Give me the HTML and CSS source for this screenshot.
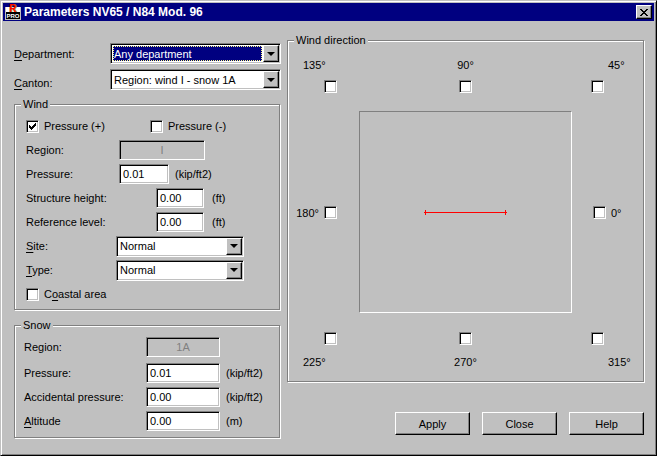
FILE: index.html
```html
<!DOCTYPE html>
<html lang="en">
<head>
    <meta charset="UTF-8">
    <meta name="viewport" content="width=device-width, initial-scale=1.0">
    <title>Parameters NV65 / N84 Mod. 96</title>
    <link rel="stylesheet" href="styles.css">
</head>
<body>

<div class="dialog">
    <div class="titlebar">
        <svg class="app-icon" width="16" height="16" viewBox="0 0 16 16">
            <rect x="0" y="3" width="16" height="13" fill="#c0c0c0"/>
            <rect x="1" y="3" width="14" height="5" fill="#fff"/>
            <text class="icon-r icon-shade" x="5" y="8">R</text>
            <text class="icon-r" x="4" y="8">R</text>
            <rect x="1" y="8" width="14" height="7" fill="#000"/>
            <text class="icon-pro" x="8" y="14">PRO</text>
        </svg>
        <h1>Parameters NV65 / N84 Mod. 96</h1>
        <button class="close-btn" type="button" aria-label="Close window">
            <svg width="8" height="7" viewBox="0 0 8 7" shape-rendering="crispEdges">
                <path d="M0 0h2v1h-2zM6 0h2v1h-2zM1 1h2v1h-2zM5 1h2v1h-2zM2 2h4v1h-4zM3 3h2v1h-2zM2 4h4v1h-4zM1 5h2v1h-2zM5 5h2v1h-2zM0 6h2v1h-2zM6 6h2v1h-2z"/>
            </svg>
        </button>
    </div>

    <form class="content">
        <div class="left">
            <div class="place">
                <label for="department"><u>D</u>epartment:</label>
                <span class="combo selected">
                    <select id="department"><option>Any department</option></select>
                    <span class="arrow"></span>
                </span>
                <label class="low" for="canton"><u>C</u>anton:</label>
                <span class="combo">
                    <select id="canton"><option>Region: wind I - snow 1A</option></select>
                    <span class="arrow"></span>
                </span>
            </div>

            <fieldset class="wind">
                <legend>Wind</legend>
                <div class="row checks">
                    <label class="check"><input type="checkbox" checked> Pressure (+)</label>
                    <label class="check"><input type="checkbox"> Pressure (-)</label>
                </div>
                <div class="row">
                    <label for="wind_region">Region:</label>
                    <input type="text" class="region" id="wind_region" value="I" disabled>
                </div>
                <div class="row">
                    <label for="wind_pressure">Pressure:</label>
                    <input type="text" class="short" id="wind_pressure" value="0.01">
                    <span>(kip/ft2)</span>
                </div>
                <div class="row far">
                    <label for="height">Structure height:</label>
                    <input type="text" class="short" id="height" value="0.00">
                    <span class="unit-ft">(ft)</span>
                </div>
                <div class="row far">
                    <label for="level">Reference level:</label>
                    <input type="text" class="short" id="level" value="0.00">
                    <span class="unit-ft">(ft)</span>
                </div>
                <div class="row near">
                    <label for="site"><u>S</u>ite:</label>
                    <span class="combo">
                        <select id="site"><option>Normal</option></select>
                        <span class="arrow"></span>
                    </span>
                </div>
                <div class="row near">
                    <label for="type"><u>T</u>ype:</label>
                    <span class="combo">
                        <select id="type"><option>Normal</option></select>
                        <span class="arrow"></span>
                    </span>
                </div>
                <div class="row">
                    <label class="check"><input type="checkbox"> <span>C<u>o</u>astal area</span></label>
                </div>
            </fieldset>

            <fieldset class="snow">
                <legend>Snow</legend>
                <div class="row first">
                    <label for="snow_region">Region:</label>
                    <input type="text" id="snow_region" value="1A" disabled>
                </div>
                <div class="row">
                    <label for="snow_pressure">Pressure:</label>
                    <input type="text" id="snow_pressure" value="0.01">
                    <span>(kip/ft2)</span>
                </div>
                <div class="row">
                    <label for="accidental">Accidental pressure:</label>
                    <input type="text" id="accidental" value="0.00">
                    <span>(kip/ft2)</span>
                </div>
                <div class="row">
                    <label for="altitude"><u>A</u>ltitude</label>
                    <input type="text" id="altitude" value="0.00">
                    <span>(m)</span>
                </div>
            </fieldset>
        </div>

        <div class="right">
            <fieldset class="direction">
                <legend>Wind direction</legend>
                <div class="compass">
                    <label class="dir corner-left"><span>135°</span><input type="checkbox"></label>
                    <label class="dir"><span>90°</span><input type="checkbox"></label>
                    <label class="dir corner-right"><span>45°</span><input type="checkbox"></label>

                    <label class="dir side-left"><span>180°</span><input type="checkbox"></label>
                    <div class="preview">
                        <svg width="83" height="6" viewBox="0 0 83 6" shape-rendering="crispEdges">
                            <rect x="0" y="3" width="83" height="1" fill="#ff0000"/>
                            <rect x="1" y="1" width="1" height="5" fill="#ff0000"/>
                            <rect x="81" y="1" width="1" height="5" fill="#ff0000"/>
                        </svg>
                    </div>
                    <label class="dir side-right"><input type="checkbox"><span>0°</span></label>

                    <label class="dir bottom corner-left"><input type="checkbox"><span>225°</span></label>
                    <label class="dir bottom"><input type="checkbox"><span>270°</span></label>
                    <label class="dir bottom corner-right"><input type="checkbox"><span>315°</span></label>
                </div>
            </fieldset>

            <div class="buttons">
                <button class="btn" type="button">Apply</button>
                <button class="btn" type="button">Close</button>
                <button class="btn" type="button">Help</button>
            </div>
        </div>
    </form>
</div>

</body>
</html>
```
FILE: styles.css
```css
* {
    box-sizing: border-box;
}
body {
    margin: 0;
    background: #c0c0c0;
}
body, input, select, button {
    font-family: "Liberation Sans", Arial, sans-serif;
    font-size: 11px;
    line-height: 14px;
    color: #000;
}
u {
    text-underline-offset: 2px;
}
.dialog {
    display: flex;
    flex-direction: column;
    min-height: 100vh;
    padding: 2px;
    border: 1px solid;
    border-color: #c0c0c0 #000 #000 #c0c0c0;
    box-shadow: inset 1px 1px #fff, inset -1px -1px #808080;
}
.titlebar {
    display: flex;
    align-items: center;
    height: 18px;
    padding: 0 2px;
    background: #000080;
}
.titlebar h1 {
    flex: 1;
    margin: 0 0 0 3px;
    font-size: 12px;
    line-height: 16px;
    color: #fff;
}
.app-icon {
    overflow: visible;
}
.icon-r {
    font: bold 10px "Liberation Sans", Arial, sans-serif;
    fill: #ff0000;
}
.icon-shade {
    fill: #808000;
}
.icon-pro {
    font: bold 6px "Liberation Sans", Arial, sans-serif;
    fill: #fff;
    text-anchor: middle;
}
.close-btn, .btn, .arrow {
    padding: 0;
    background: #c0c0c0;
    border: 1px solid;
    border-color: #fff #000 #000 #fff;
    box-shadow: inset -1px -1px #808080;
}
.close-btn {
    display: flex;
    align-items: center;
    justify-content: center;
    width: 16px;
    height: 14px;
}

.content {
    display: grid;
    grid-template-columns: 267px 1fr;
    column-gap: 6px;
    flex: 1;
    padding: 12px 10px 15px 11px;
}
.left, .right {
    display: flex;
    flex-direction: column;
}
.place {
    display: grid;
    grid-template-columns: 96px 1fr;
    row-gap: 5px;
    align-items: center;
    margin: 10px 0 7px;
}
.low {
    align-self: end;
}

fieldset {
    min-width: 0;
    margin: 0;
    padding: 0;
    border: 1px solid #808080;
    box-shadow: 1px 1px #fff, inset 1px 1px #fff;
}
legend {
    margin-left: 6px;
    padding: 0 2px;
    background: #c0c0c0;
}
.row {
    display: flex;
    align-items: center;
    gap: 6px;
    height: 24px;
}

input[type="text"] {
    height: 20px;
    margin: 0;
    padding: 2px 3px;
    background: #fff;
    border: 1px solid;
    border-color: #808080 #fff #fff #808080;
    border-radius: 0;
    box-shadow: inset 1px 1px #000, inset -1px -1px #c0c0c0;
}
input[type="text"]:disabled {
    background: #c0c0c0;
    color: #808080;
    text-align: center;
}
input[type="checkbox"] {
    appearance: none;
    flex: none;
    width: 13px;
    height: 13px;
    margin: 0;
    background: #fff;
    border: 1px solid;
    border-color: #808080 #fff #fff #808080;
    box-shadow: inset 1px 1px #000, inset -1px -1px #c0c0c0;
}
input[type="checkbox"]:checked {
    background: #fff url("data:image/svg+xml,%3Csvg xmlns='http://www.w3.org/2000/svg' width='7' height='7' shape-rendering='crispEdges'%3E%3Cpath d='M0 2h1v1h1v1h1v-1h1v-1h1v-1h1v-1h1v3h-1v1h-1v1h-1v1h-1v1h-1v-1h-1v-1h-1z'/%3E%3C/svg%3E") no-repeat 2px 2px;
}
.check {
    display: flex;
    align-items: center;
    gap: 5px;
}
.combo {
    display: flex;
    height: 21px;
    padding: 1px;
    background: #fff;
    border: 1px solid;
    border-color: #808080 #fff #fff #808080;
    box-shadow: inset 1px 1px #000, inset -1px -1px #c0c0c0;
}
.combo select {
    appearance: none;
    flex: 1;
    min-width: 0;
    margin: 1px;
    padding: 0 1px;
    background: #fff;
    border: 0;
    border-radius: 0;
}
.combo.selected select {
    padding: 0;
    background: #000080;
    border: 1px dotted #ffff80;
    color: #fff;
}
.arrow {
    display: flex;
    align-items: center;
    justify-content: center;
    width: 16px;
    pointer-events: none;
}
.arrow::before {
    content: "";
    border: 4px solid transparent;
    border-top-color: #000;
    border-bottom: 0;
}

.wind, .snow {
    margin-right: 1px;
}
.wind {
    padding: 3px 0;
}
.wind .row {
    padding-left: 11px;
}
.wind .row label {
    width: 93px;
}
.wind .row .check {
    width: 124px;
}
.wind .checks {
    gap: 0;
}
.row input.region {
    width: 86px;
}
.row .short {
    width: 50px;
}
.wind .row > label:not(.check) + * {
    margin-left: -6px;
}
.wind .far label {
    width: 130px;
}
.wind .far .short {
    width: 48px;
}
.unit-ft {
    margin-left: 2px;
}
.wind .near label {
    width: 90px;
}
.near .combo {
    width: 128px;
}

.snow {
    margin-top: 8px;
    padding: 3px 0 4px;
}
.snow .row {
    padding-left: 9px;
}
.snow label {
    width: 116px;
}
.snow input {
    width: 74px;
}
.snow .first {
    margin-bottom: 2px;
}

.direction {
    flex: 1;
}
.compass {
    display: grid;
    grid-template-columns: 52px 1fr 40px;
    grid-template-rows: auto 1fr auto;
    column-gap: 19px;
    row-gap: 18px;
    height: 100%;
    padding: 11px 12px 12px 0;
}
.dir {
    display: flex;
    flex-direction: column;
    align-items: center;
    gap: 8px;
}
.bottom {
    gap: 10px;
}
.corner-left {
    align-items: flex-start;
    padding: 0 3px 0 15px;
}
.corner-left input {
    align-self: flex-end;
}
.corner-right {
    align-items: flex-start;
}
.corner-right span {
    margin-left: 17px;
}
.side-left, .side-right {
    flex-direction: row;
    gap: 5px;
}
.side-left {
    justify-content: flex-end;
    padding-right: 3px;
}
.side-right {
    padding-left: 2px;
}
.preview {
    display: flex;
    align-items: center;
    justify-content: center;
    margin-bottom: 1px;
    border: 1px solid;
    border-color: #808080 #fff #fff #808080;
}
.buttons {
    display: flex;
    justify-content: flex-end;
    gap: 12px;
    margin: 30px 0 3px;
}
.btn {
    width: 75px;
    height: 23px;
}
```
